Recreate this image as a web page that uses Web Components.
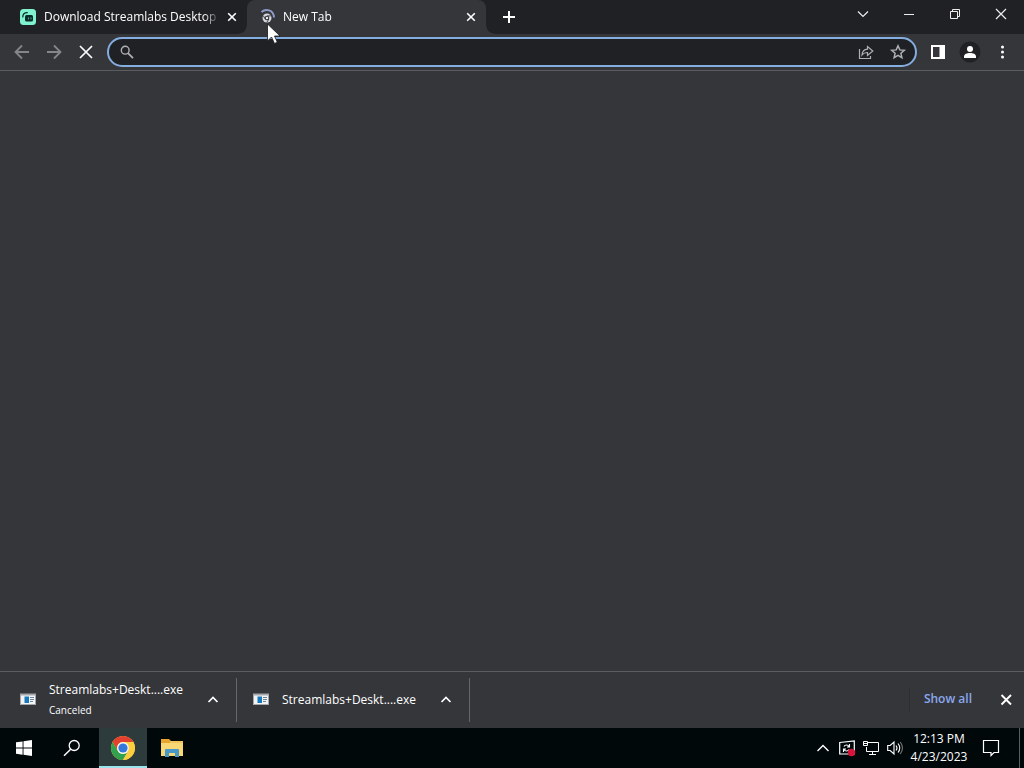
<!DOCTYPE html>
<html lang="en">
<head>
<meta charset="utf-8">
<meta name="viewport" content="width=device-width">
<title>New Tab</title>
<style>
html, body { margin: 0; height: 100%; }
body { background: #35363a; color: #fff; font: 12px/16px "Open Sans", "Noto Sans", sans-serif; overflow: hidden; }
</style>
</head>
<body>
<desk-top></desk-top>
<script>
const icons = {
  down: [16, '<path d="M3 5.5l5 5 5-5" fill="none" stroke="currentColor" stroke-width="1.2"/>'],
  minimize: [16, '<path d="M3 8.5h10" stroke="currentColor"/>'],
  restore: [16, '<path d="M3.5 5.5h7v7h-7zM5.5 5.5v-2h7v7h-2" fill="none" stroke="currentColor"/>'],
  winclose: [16, '<path d="M3 3l10 10M13 3L3 13" stroke="currentColor" stroke-width="1.2"/>'],
  close: [16, '<path d="M4.2 4.2l7.6 7.6M11.8 4.2l-7.6 7.6" stroke="currentColor" stroke-width="1.6"/>'],
  dismiss: [16, '<path d="M3.5 3l9.500 9.500M13 3l-9.500 9.500" stroke="currentColor" stroke-width="1.9"/>'],
  plus: [16, '<path d="M8 2v12M2 8h12" stroke="currentColor" stroke-width="2"/>'],
  back: [16, '<path d="M15 8H2M8 1.5L1.5 8 8 14.5" fill="none" stroke="currentColor" stroke-width="1.8"/>'],
  forward: [16, '<path d="M1 8h13M8 1.5L14.5 8 8 14.5" fill="none" stroke="currentColor" stroke-width="1.8"/>'],
  stop: [16, '<path d="M2 2l12 12M14 2L2 14" stroke="currentColor" stroke-width="1.7"/>'],
  find: [16, '<circle cx="7.2" cy="6.2" r="3.9" fill="none" stroke="currentColor" stroke-width="1.4"/><path d="M10 9.200l5 5" stroke="currentColor" stroke-width="1.7"/>'],
  share: [16, '<path d="M1.5 5v9.500h11V12M4 11c.3-3.800 2-5.600 5.500-5.800V2.500l5.300 4.500-5.300 4.400V8.500C7 8.400 5.400 9.200 4 11z" fill="none" stroke="currentColor" stroke-width="1.2"/>'],
  star: [16, '<path d="M8 1.800l1.800 4.100 4.500.4-3.400 3 1 4.400L8 11.400l-3.900 2.300 1-4.400-3.400-3 4.500-.4z" fill="none" stroke="currentColor" stroke-width="1.5"/>'],
  panel: [16, '<path d="M1 1h14v14H1zm2 2v10h6.500V3z" fill="currentColor" fill-rule="evenodd"/>'],
  profile: [24, '<circle cx="12" cy="12" r="10.500" fill="#202124"/><circle cx="12" cy="9" r="3" fill="currentColor"/><path d="M6 18v-1.500c0-2.400 3-3.500 6-3.500s6 1.100 6 3.500V18z" fill="currentColor"/>'],
  menu: [16, '<g fill="currentColor"><circle cx="8.500" cy="3" r="1.500"/><circle cx="8.500" cy="8" r="1.500"/><circle cx="8.500" cy="13" r="1.500"/></g>'],
  up: [16, '<path d="M3.500 10L8 5.500l4.500 4.500" fill="none" stroke="currentColor" stroke-width="1.7"/>'],
  streamlabs: [16, '<rect width="16" height="16" rx="3.500" fill="#7ff3cd"/><path d="M2.800 8C2.800 5 4.500 3.600 7.300 3.600" fill="none" stroke="#0b2b2b" stroke-width="1.2" stroke-linecap="round"/><rect x="5" y="6" width="8" height="6.600" rx="1.500" fill="#0b2b2b"/><path d="M8.500 8.500v1.800M11 8.500v1.800" stroke="#64bca2" stroke-width=".9"/>'],
  loading: [16, '<circle cx="8" cy="9" r="4.500" fill="#d4d6dc"/><circle cx="8" cy="9" r="1.800" fill="#e8eaed" stroke="#35363a" stroke-width="1.1"/><path d="M8 6.900h3.800M6.200 10L4.400 6.900M9.800 10L7.800 13.400" stroke="#35363a" stroke-width=".9"/><path d="M2.500 3C6.500-.5 14.500.5 15 8.500" fill="none" stroke="#8f9ccb" stroke-width="1.900"/>'],
  exe: [16, '<path d="M0 1.500h16V13H0z" fill="#a5a7ab"/><path d="M1 3.500h14V12H1z" fill="#f4f4f4"/><path d="M4.500 4.500h4.500v6.500H4.500z" fill="#1979bd"/><path d="M10 5.500h4M10 7.500h4M10 9.500h3" stroke="#69849b"/>'],
  windows: [16, '<path d="M0 2.300L6.600 1.400V7.500H0zM7.500 1.300L16 0v7.500H7.500zM0 8.500h6.600v6.200L0 13.800zM7.500 8.500H16V16l-8.500-1.200z" fill="currentColor"/>'],
  taskfind: [16, '<circle cx="10.200" cy="5.500" r="5" fill="none" stroke="currentColor" stroke-width="1.3"/><path d="M6.700 9.200L0 15.800" stroke="currentColor" stroke-width="1.5"/>'],
  chrome: [24, '<circle cx="12" cy="12" r="12" fill="#fbcd3f"/><path d="M1.610 6A12 12 0 0 1 22.390 6H12a6 6 0 0 0-5.196 9z" fill="#e3402f"/><path d="M1.610 6L6.804 15A6 6 0 0 0 17.196 15L12 24A12 12 0 0 1 1.610 6z" fill="#2fa14f"/><path d="M12 6h10.390A12 12 0 0 1 12 24l5.196-9A6 6 0 0 0 12 6z" fill="#fbcd3f"/><circle cx="12" cy="12" r="5.900" fill="#f7f7f7"/><circle cx="12" cy="12" r="4.600" fill="#3478dc"/>'],
  folder: [22, '<path d="M0 2h8l2 2h12v14H0z" fill="#e5a52f"/><path d="M9 4h13v2H9z" fill="#f0c65c"/><path d="M0 6h22v13H0z" fill="#f8d775"/><path d="M4 20v-7q0-1 1-1h12q1 0 1 1v7h-4v-4H8v4z" fill="#4798c9"/>'],
  trayup: [16, '<path d="M2.500 11L8 5.500l5.500 5.500" fill="none" stroke="currentColor" stroke-width="1.4"/>'],
  sync: [16, '<path d="M.7 2.500L15.300.8V14L.7 14z" fill="none" stroke="currentColor" stroke-width="1.2"/><path d="M5 6.500c1-2 4-2 5 0M10.500 4v3H8M10 9.500c-1 2-4 2-5 0M4.500 12V9H7" fill="none" stroke="currentColor" stroke-width="1.1"/><circle cx="12.500" cy="12.500" r="3.700" fill="#d9143c"/>'],
  network: [16, '<path d="M5 2.500h10.500v9H3.500V7M9.500 11.500v3M6 14.500h7M.5 1.500h4v4h-4zM1 3.500h3" fill="none" stroke="currentColor"/>'],
  volume: [16, '<path d="M.7 5.500h2.500L7 2v12l-3.800-3.500H.7z" fill="none" stroke="currentColor" stroke-width="1.1"/><path d="M9 5.500q2 2.500 0 5M11 3.500q3.500 4.500 0 9" fill="none" stroke="currentColor" stroke-width="1.1"/><path d="M13.300 2q4.300 6 0 12" fill="none" stroke="#777" stroke-width="1.1"/>'],
  notices: [16, '<path d="M.5.500h15v12H11l-3 3v-3H.5z" fill="none" stroke="currentColor" stroke-width="1.2"/>'],
  pointer: [20, '<path d="M.5 0v17l4-4 3 6.500 2.800-1.300L7.500 12H13z" fill="#fff" stroke="#17191c" stroke-width=".8"/>']
};

const define = (name, render) => customElements.define(name, class extends HTMLElement {
  constructor() {
    super();
    this.attachShadow({ mode: 'open' });
  }
  connectedCallback() {
    this.shadowRoot.innerHTML = render(this);
  }
});

define('ui-icon', el => {
  const [size, art] = icons[el.getAttribute('name')];
  return `<style>
    :host { display: block; flex: none; width: ${size}px; height: ${size}px; }
    svg { display: block; overflow: visible; }
  </style><svg width="${size}" height="${size}" viewBox="0 0 ${size} ${size}" aria-hidden="true">${art}</svg>`;
});

define('icon-button', el => `<style>
    :host { display: flex; flex: none; width: 32px; height: 28px; }
    button { display: grid; place-items: center; width: 100%; height: 100%; margin: 0; padding: 0; border: 0; background: none; color: inherit; }
  </style><button type="button" aria-label="${el.getAttribute('label')}"><ui-icon name="${el.getAttribute('icon')}"></ui-icon></button>`);

define('browser-tab', el => `<style>
    :host { display: flex; flex: 0 1 239px; min-width: 0; box-sizing: border-box; align-items: center; height: 34px; padding: 0 7px 0 12px; position: relative; }
    :host([active]) { background: #35363a; border-radius: 8px 8px 0 0; }
    :host([active])::before, :host([active])::after { content: ""; position: absolute; bottom: 0; width: 8px; height: 8px; }
    :host([active])::before { right: 100%; background: radial-gradient(circle at 0 0, transparent 7px, #35363a 8px); }
    :host([active])::after { left: 100%; background: radial-gradient(circle at 100% 0, transparent 7px, #35363a 8px); }
    span { flex: 1; min-width: 0; margin: 0 4px 0 8px; overflow: hidden; white-space: nowrap; -webkit-mask: linear-gradient(to left, transparent, #000 16px); mask: linear-gradient(to left, transparent, #000 16px); }
    icon-button { width: 16px; height: 16px; }
  </style>
  <ui-icon name="${el.getAttribute('icon')}"></ui-icon><span><slot></slot></span>
  <icon-button icon="close" label="Close tab"></icon-button>`);

define('tab-strip', () => `<style>
    :host { display: flex; height: 34px; padding-left: 8px; background: #202124; }
    .new { height: 34px; margin-left: 7px; }
    .window { display: flex; margin-left: auto; color: #eee; }
    .window icon-button { width: 46px; }
  </style>
  <browser-tab icon="streamlabs">Download Streamlabs Desktop Live</browser-tab>
  <browser-tab icon="loading" active>New Tab</browser-tab>
  <icon-button class="new" icon="plus" label="New tab"></icon-button>
  <div class="window">
    <icon-button icon="down" label="Search tabs"></icon-button>
    <icon-button icon="minimize" label="Minimize"></icon-button>
    <icon-button icon="restore" label="Restore"></icon-button>
    <icon-button icon="winclose" label="Close"></icon-button>
  </div>`);

define('address-box', () => `<style>
    :host { display: flex; flex: 1; min-width: 0; box-sizing: border-box; height: 30px; align-items: center; padding: 0 1px; border: 2px solid #85aee0; border-radius: 15px; background: #202124; color: #aeb1b5; }
    input { flex: 1; min-width: 0; height: 24px; padding: 0; border: 0; outline: 0; background: none; color: #fff; font: inherit; }
    icon-button { height: 26px; }
  </style>
  <icon-button icon="find" label="Search"></icon-button>
  <input type="text" aria-label="Address and search bar">
  <icon-button icon="share" label="Share this page"></icon-button>
  <icon-button icon="star" label="Bookmark this tab"></icon-button>`);

define('tool-bar', () => `<style>
    :host { display: flex; align-items: center; height: 36px; padding: 0 6px; border-bottom: 1px solid #5c5d61; background: #35363a; }
    address-box { margin: 0 5px; }
    .dim { color: #85868a; }
  </style>
  <icon-button class="dim" icon="back" label="Back"></icon-button>
  <icon-button class="dim" icon="forward" label="Forward"></icon-button>
  <icon-button icon="stop" label="Stop loading"></icon-button>
  <address-box></address-box>
  <icon-button icon="panel" label="Side panel"></icon-button>
  <icon-button icon="profile" label="Profile"></icon-button>
  <icon-button icon="menu" label="Menu"></icon-button>`);

define('download-item', () => `<style>
    :host { display: flex; flex: 0 1 233px; box-sizing: border-box; align-items: center; height: 44px; padding: 0 7px 0 16px; border-right: 1px solid #66676b; }
    .text { flex: 1; margin-left: 13px; line-height: 20px; white-space: nowrap; }
    ::slotted(small) { display: block; font-size: 10px; line-height: 20px; }
  </style>
  <ui-icon name="exe"></ui-icon><div class="text"><slot></slot><slot name="status"></slot></div>
  <icon-button icon="up" label="Download options"></icon-button>`);

define('download-shelf', () => `<style>
    :host { display: flex; align-items: center; height: 56px; padding: 0 2px 0 4px; border-top: 1px solid #5c5d61; background: #35363a; }
    .all { height: 24px; margin-left: auto; padding: 0 18px 2px 14px; border: 0; border-left: 1px solid #2d2e32; background: none; color: #8aa8ee; font: 600 12px/16px "Open Sans", "Noto Sans", sans-serif; }
  </style>
  <download-item>Streamlabs+Deskt....exe<small slot="status">Canceled</small></download-item>
  <download-item>Streamlabs+Deskt....exe</download-item>
  <button class="all" type="button">Show all</button>
  <icon-button icon="dismiss" label="Close downloads"></icon-button>`);

define('task-bar', () => `<style>
    :host { display: flex; height: 40px; background: #00080a; }
    icon-button { width: 48px; height: 40px; }
    .active { box-sizing: border-box; margin: 0 1px 0 3px; background: #2e3b3c; box-shadow: inset 0 -2px #9be4ee; }
    .tray { display: flex; margin-left: auto; padding-right: 4px; }
    .tray icon-button { width: 24px; }
    time { width: 64px; padding-top: 2px; line-height: 18px; text-align: center; white-space: nowrap; }
    .tray .notices { width: 40px; margin-right: 8px; }
    .edge { width: 1px; background: #566064; }
  </style>
  <icon-button icon="windows" label="Start"></icon-button>
  <icon-button icon="taskfind" label="Search"></icon-button>
  <icon-button class="active" icon="chrome" label="Google Chrome"></icon-button>
  <icon-button icon="folder" label="File Explorer"></icon-button>
  <div class="tray">
    <icon-button icon="trayup" label="Show hidden icons"></icon-button>
    <icon-button icon="sync" label="Updates"></icon-button>
    <icon-button icon="network" label="Network"></icon-button>
    <icon-button icon="volume" label="Volume"></icon-button>
    <time datetime="2023-04-23T12:13">12:13 PM<br>4/23/2023</time>
    <icon-button class="notices" icon="notices" label="Notifications"></icon-button>
    <div class="edge"></div>
  </div>`);

define('desk-top', () => `<style>
    :host { display: flex; flex-direction: column; height: 100%; position: relative; }
    main { flex: 1; background: #35363a; }
    .pointer { position: absolute; left: 267px; top: 24px; pointer-events: none; }
  </style>
  <tab-strip></tab-strip>
  <tool-bar></tool-bar>
  <main aria-label="Page"></main>
  <download-shelf></download-shelf>
  <task-bar></task-bar>
  <ui-icon class="pointer" name="pointer"></ui-icon>`);
</script>
</body>
</html>
